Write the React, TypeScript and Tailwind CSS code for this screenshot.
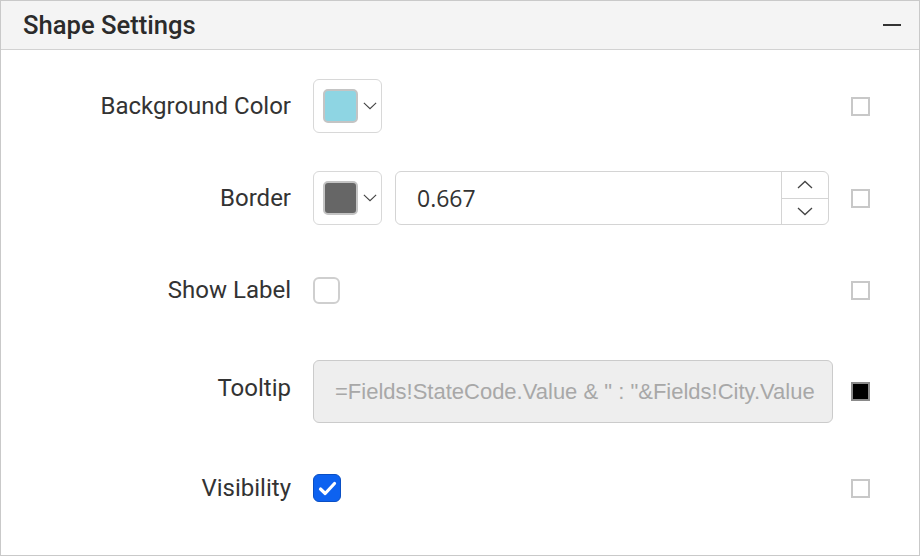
import React from 'react'

const labelFont = { fontFamily: 'Roboto, "Liberation Sans", sans-serif' }

function Chevron({ up = false, className = '' }: { up?: boolean; className?: string }) {
  return (
    <svg width="16" height="9" viewBox="0 0 16 9" className={className} fill="none">
      <path
        d={up ? 'M1 8 L8 1.5 L15 8' : 'M1 1 L8 7.5 L15 1'}
        stroke="#444"
        strokeWidth="1.3"
      />
    </svg>
  )
}

function ColorPicker({ color }: { color: string }) {
  return (
    <div className="w-[69px] h-[54px] border border-[#d8d8d8] rounded-[6px] bg-white flex items-center pl-[9px] gap-[5px]">
      <div className="w-[35px] h-[34px] rounded-[5px] border-2 border-[#c4c4c4]" style={{ backgroundColor: color }} />
      <Chevron className="w-[14px] h-[8px]" />
    </div>
  )
}

function SideBox({ filled = false }: { filled?: boolean }) {
  return (
    <div className={`w-[19px] h-[19px] border-2 ${filled ? 'bg-black border-[#8a8a8a]' : 'bg-white border-[#c8c8c8]'}`} />
  )
}

function Row({ label, height, children, side, labelClass = '' }: { label: string; height: string; children?: React.ReactNode; side?: React.ReactNode; labelClass?: string }) {
  return (
    <div className={`flex items-center ${height}`}>
      <div className={`w-[290px] text-right text-[24px] leading-[28px] text-[#333] ${labelClass}`} style={labelFont}>{label}</div>
      <div className="w-[538px] ml-[22px] flex items-center">{children}</div>
      <div>{side ?? <SideBox />}</div>
    </div>
  )
}

export default function App() {
  return (
    <div className="w-[920px] h-[556px] border border-[#c9c9c9] bg-white overflow-hidden">
      {/* Header */}
      <div className="h-[49px] bg-[#f4f4f4] border-b border-[#d2d2d2] flex items-center justify-between pl-[22px] pr-[18px]">
        <span className="text-[25.6px] font-medium text-[#2b2b2b]" style={labelFont}>Shape Settings</span>
        <div className="w-[18px] h-[2px] bg-[#333]" />
      </div>

      <div className="pt-[10px]">
        <Row label="Background Color" height="h-[92px]">
          <ColorPicker color="#8ed5e3" />
        </Row>

        <Row label="Border" height="h-[92px]">
          <ColorPicker color="#666666" />
          <div className="ml-[13px] w-[434px] h-[54px] border border-[#d4d4d4] rounded-[6px] flex">
            <div className="flex-1 flex items-center pl-[21px] text-[23px] text-[#333]" style={{ fontFamily: '"Open Sans", sans-serif' }}>
              0.667
            </div>
            <div className="w-[47px] border-l border-[#d4d4d4] flex flex-col">
              <div className="flex-1 flex items-center justify-center border-b border-[#d4d4d4]">
                <Chevron up />
              </div>
              <div className="flex-1 flex items-center justify-center">
                <Chevron />
              </div>
            </div>
          </div>
        </Row>

        <Row label="Show Label" height="h-[92px]">
          <div className="w-[27px] h-[27px] rounded-[6px] border-2 border-[#cfcfcf] bg-white" />
        </Row>

        <Row label="Tooltip" height="h-[110px]" side={<SideBox filled />} labelClass="-mt-[6px]">
          <div
            className="w-[520px] h-[63px] bg-[#eeeeee] border border-[#cbcbcb] rounded-[6px] flex items-center pl-[21px] text-[22px] text-[#a8a8a8] whitespace-nowrap overflow-hidden"
            style={{ fontFamily: '"Liberation Sans", Arial, sans-serif' }}
          >
            =Fields!StateCode.Value &amp; " : "&amp;Fields!City.Value
          </div>
        </Row>

        <Row label="Visibility" height="h-[84px]">
          <div className="w-[28px] h-[28px] rounded-[6px] bg-[#0d62f0] border border-[#0a4fc4] flex items-center justify-center">
            <svg width="19" height="15" viewBox="0 0 19 15" fill="none">
              <path d="M2.5 8 L7.2 12.5 L16.5 2.5" stroke="white" strokeWidth="3.2" strokeLinecap="round" strokeLinejoin="round" />
            </svg>
          </div>
        </Row>
      </div>
    </div>
  )
}
